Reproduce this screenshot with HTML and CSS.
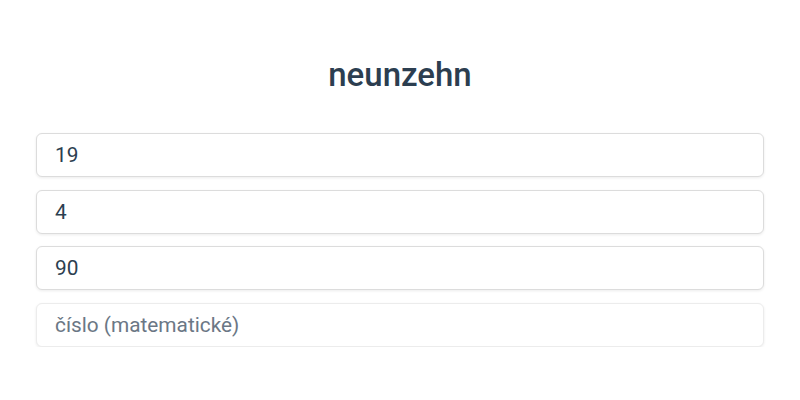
FILE: index.html
```html
<!DOCTYPE html>
<html>
<head>
<meta charset="utf-8">
<link rel="stylesheet" href="styles.css">
</head>
<body>
<div class="app">
  <h1 class="title">neunzehn</h1>
  <div class="fields">
    <input class="field" type="text" value="19">
    <input class="field" type="text" value="4">
    <input class="field" type="text" value="90">
    <input class="field empty" type="text" placeholder="číslo (matematické)">
  </div>
</div>
</body>
</html>
```
FILE: styles.css
```css
html, body {
  margin: 0;
  padding: 0;
  background: #ffffff;
}
body {
  font-family: Roboto, "Noto Sans", sans-serif;
  color: #2c3e50;
}
.app {
  padding: 52px 36px 0;
}
.title {
  margin: 0;
  text-align: center;
  font-size: 33px;
  font-weight: 500;
  line-height: 46px;
  color: #2c3e50;
}
.fields {
  margin-top: 35px;
  display: flex;
  flex-direction: column;
  gap: 12.66px;
}
.field {
  box-sizing: border-box;
  height: 44px;
  width: 100%;
  padding: 0 18px;
  border: 1px solid #dcdcdc;
  border-radius: 6px;
  box-shadow: 0 1px 3px rgba(0,0,0,0.08);
  font-family: Roboto, "Noto Sans", sans-serif;
  font-size: 20.8px;
  color: #2c3e50;
  background: #fff;
  outline: none;
}
.field::placeholder {
  color: #6b7785;
}
.field.empty {
  border-color: #ececec;
}
```
